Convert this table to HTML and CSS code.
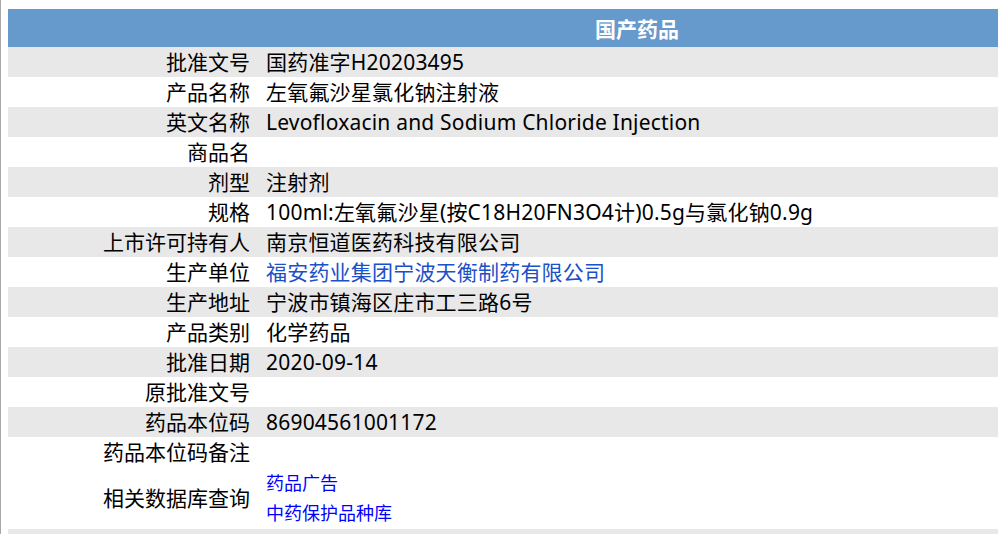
FILE: index.html
```html
<!DOCTYPE html>
<html lang="zh-CN">
<head>
<meta charset="utf-8">
<title>国产药品</title>
<link rel="stylesheet" href="styles.css">
</head>
<body>
<div class="frame">
<table class="drug">
  <thead>
    <tr><th class="hlabel"></th><th class="htitle">国产药品</th></tr>
  </thead>
  <tbody>
    <tr class="alt"><td class="k">批准文号</td><td class="v">国药准字H20203495</td></tr>
    <tr><td class="k">产品名称</td><td class="v">左氧氟沙星氯化钠注射液</td></tr>
    <tr class="alt"><td class="k">英文名称</td><td class="v">Levofloxacin and Sodium Chloride Injection</td></tr>
    <tr><td class="k">商品名</td><td class="v"></td></tr>
    <tr class="alt"><td class="k">剂型</td><td class="v">注射剂</td></tr>
    <tr><td class="k">规格</td><td class="v">100ml:左氧氟沙星(按C18H20FN3O4计)0.5g与氯化钠0.9g</td></tr>
    <tr class="alt"><td class="k">上市许可持有人</td><td class="v">南京恒道医药科技有限公司</td></tr>
    <tr><td class="k">生产单位</td><td class="v"><a class="corp" href="#">福安药业集团宁波天衡制药有限公司</a></td></tr>
    <tr class="alt"><td class="k">生产地址</td><td class="v">宁波市镇海区庄市工三路6号</td></tr>
    <tr><td class="k">产品类别</td><td class="v">化学药品</td></tr>
    <tr class="alt"><td class="k">批准日期</td><td class="v">2020-09-14</td></tr>
    <tr><td class="k">原批准文号</td><td class="v"></td></tr>
    <tr class="alt"><td class="k">药品本位码</td><td class="v">86904561001172</td></tr>
    <tr><td class="k">药品本位码备注</td><td class="v"></td></tr>
    <tr><td class="k">相关数据库查询</td><td class="v links"><a class="db" href="#">药品广告</a><a class="db" href="#">中药保护品种库</a></td></tr>
    <tr class="alt"><td class="k">&nbsp;</td><td class="v">&nbsp;</td></tr>
  </tbody>
</table>
</div>
</body>
</html>
```

FILE: styles.css
```css
html, body {
  margin: 0;
  padding: 0;
  background: #ffffff;
  overflow: hidden;
}
body {
  border-left: 1px solid #a8a8a8;
  height: 534px;
  box-sizing: border-box;
  font-family: "Noto Sans", "Noto Sans CJK SC", sans-serif;
  color: #000000;
}
.frame {
  padding: 9px 0 0 7px;
  width: 1020px;
}
.drug {
  border-collapse: collapse;
  border-spacing: 0;
  width: 1010px;
  font-size: 21px;
}
.drug th {
  background: #6699cc;
  color: #ffffff;
  height: 38px;
  padding: 0;
  font-weight: bold;
  font-family: "Noto Sans CJK SC", sans-serif;
}
.hlabel { width: 250px; }
.htitle { text-align: center; padding-right: 2px !important; }
.drug td {
  height: 30px;
  padding: 0;
  line-height: 30px;
  white-space: nowrap;
}
.drug tr.alt td { background: #e8e8e8; }
.k {
  width: 242px;
  padding-right: 8px !important;
  text-align: right;
}
.v {
  padding-left: 8px !important;
  text-align: left;
  letter-spacing: 0.2px;
}
.corp {
  color: #1a50c8;
  text-decoration: none;
}
.links {
  padding-top: 1px !important;
  padding-bottom: 1px !important;
  letter-spacing: 0;
}
.db {
  display: block;
  color: #0000ff;
  font-size: 18px;
  line-height: 30px;
  text-decoration: none;
}
```
